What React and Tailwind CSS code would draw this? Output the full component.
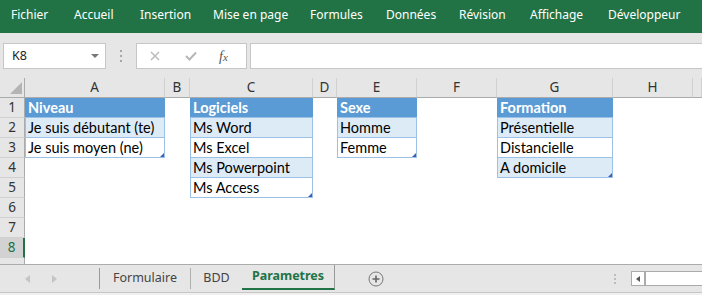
import React from "react";

const ribbon = [
  ["Fichier", 63],
  ["Accueil", 66],
  ["Insertion", 73],
  ["Mise en page", 97],
  ["Formules", 76],
  ["Données", 73],
  ["Révision", 71],
  ["Affichage", 78],
  ["Développeur", 90],
];

const colLetters = ["A", "B", "C", "D", "E", "F", "G", "H", ""];

const tables = {
  0: ["Niveau", "Je suis débutant (te)", "Je suis moyen (ne)"],
  2: ["Logiciels", "Ms Word", "Ms Excel", "Ms Powerpoint", "Ms Access"],
  4: ["Sexe", "Homme", "Femme"],
  6: ["Formation", "Présentielle", "Distancielle", "A domicile"],
};

const cellFont = { fontFamily: "Lato, 'Liberation Sans', sans-serif" };

function Cell({ col, row }) {
  const t = tables[col];
  if (!t || row > t.length) return <div className="bg-white" />;
  const text = t[row - 1];
  const last = row === t.length;
  if (row === 1) {
    return (
      <div
        className="bg-[#5b9bd5] border-b border-[#9bc2e6] text-white font-bold text-[14.5px] leading-[20px] pl-[3px] whitespace-nowrap overflow-hidden"
        style={cellFont}
      >
        {text}
      </div>
    );
  }
  const banded = row % 2 === 0;
  return (
    <div
      className={`relative border-x border-b border-[#9bc2e6] text-black text-[14.5px] leading-[20px] pl-[2px] whitespace-nowrap overflow-hidden ${
        banded ? "bg-[#ddebf7]" : "bg-white"
      }`}
      style={cellFont}
    >
      {text}
      {last && (
        <svg className="absolute right-0 bottom-0" width="4" height="4" viewBox="0 0 4 4">
          <path d="M4 0 L4 4 L0 4 Z" fill="#3e5fb5" />
        </svg>
      )}
    </div>
  );
}

export default function App() {
  const rows = [1, 2, 3, 4, 5, 6, 7, 8];
  return (
    <div
      className="w-[702px] h-[295px] overflow-hidden bg-[#e6e6e6] flex flex-col"
      style={{ fontFamily: "'Noto Sans', sans-serif" }}
    >
      {/* Ribbon */}
      <div className="h-[33px] bg-[#217346] flex items-center pl-[11px] pb-[4px] shrink-0">
        {ribbon.map(([label, w]) => (
          <div key={label} className="text-white text-[12px] whitespace-nowrap" style={{ width: w }}>
            {label}
          </div>
        ))}
      </div>

      {/* Formula bar */}
      <div className="h-[45px] flex items-start pt-[10px] shrink-0">
        <div className="ml-[3px] w-[103px] h-[26px] bg-white border border-[#c6c6c6] flex items-center justify-between pl-[8px] pr-[6px]">
          <span className="text-[12.5px] text-[#222]">K8</span>
          <svg width="8" height="5" viewBox="0 0 8 5">
            <path d="M0 0 L8 0 L4 4 Z" fill="#777" />
          </svg>
        </div>
        <div className="w-[30px] h-[26px] flex flex-col items-center justify-center gap-[3px]">
          <span className="w-[2px] h-[2px] bg-[#a6a6a6]" />
          <span className="w-[2px] h-[2px] bg-[#a6a6a6]" />
          <span className="w-[2px] h-[2px] bg-[#a6a6a6]" />
        </div>
        <div className="w-[111px] h-[26px] bg-white border border-[#c6c6c6] flex items-center">
          <svg className="ml-[13px]" width="10" height="10" viewBox="0 0 10 10">
            <path d="M1 1 L9 9 M9 1 L1 9" stroke="#b7b7b7" strokeWidth="1.3" />
          </svg>
          <svg className="ml-[25px]" width="12" height="10" viewBox="0 0 12 10">
            <path d="M1 5 L4.5 8.5 L11 1.5" stroke="#b7b7b7" strokeWidth="2" fill="none" />
          </svg>
          <span
            className="ml-[22px] text-[14px] italic text-[#555]"
            style={{ fontFamily: "'Liberation Serif', serif" }}
          >
            f<span className="text-[11px]">x</span>
          </span>
        </div>
        <div className="ml-[3px] flex-1 h-[26px] bg-white border border-r-0 border-[#c6c6c6]" />
      </div>

      {/* Sheet grid */}
      <div className="flex-1 min-h-0 overflow-hidden grid grid-cols-[25px_140px_25px_123px_24px_80px_80px_116px_80px_1fr] grid-rows-[20px_repeat(9,20px)] bg-white">
        <div className="relative bg-[#e6e6e6] border-r border-b border-[#ababab]">
          <svg className="absolute right-[2px] bottom-[3px]" width="12" height="12" viewBox="0 0 12 12">
            <path d="M12 0 L12 12 L0 12 Z" fill="#b4b4b4" />
          </svg>
        </div>
        {colLetters.map((l, i) => (
          <div
            key={i}
            className="bg-[#e6e6e6] border-r border-b border-r-[#d0d0d0] border-b-[#ababab] text-[13.5px] text-[#333] flex items-center justify-center"
          >
            {l}
          </div>
        ))}
        {rows.map((r) => (
          <React.Fragment key={r}>
            <div
              className={`border-b border-[#d0d0d0] text-[13.5px] flex items-center justify-center ${
                r === 8
                  ? "bg-[#d2d2d2] text-[#217346] border-r-2 border-r-[#217346]"
                  : "bg-[#e6e6e6] text-[#333] border-r border-r-[#ababab]"
              }`}
            >
              {r}
            </div>
            {colLetters.map((_, ci) => (
              <Cell key={ci} col={ci} row={r} />
            ))}
          </React.Fragment>
        ))}
        <div className="bg-[#e6e6e6] border-r border-[#ababab]" />
        {colLetters.map((_, ci) => (
          <div key={ci} className="bg-white" />
        ))}
      </div>

      {/* Tab bar */}
      <div className="h-[29px] shrink-0 border-t border-[#ababab] border-b border-b-[#c6c6c6] bg-[#e6e6e6] flex items-stretch">
        <div className="w-[100px] flex items-center pl-[25px] gap-[22px] border-r border-[#9a9a9a] my-[3px]">
          <svg width="5" height="8" viewBox="0 0 5 8">
            <path d="M5 0 L0 4 L5 8 Z" fill="#c4c4c4" />
          </svg>
          <svg width="5" height="8" viewBox="0 0 5 8">
            <path d="M0 0 L5 4 L0 8 Z" fill="#c4c4c4" />
          </svg>
        </div>
        <div className="w-[91px] flex items-center justify-center text-[12.5px] text-[#444] border-r border-[#b0b0b0] my-[3px]">
          Formulaire
        </div>
        <div className="w-[51px] flex items-center justify-center text-[12.5px] text-[#444]">BDD</div>
        <div className="w-[93px] flex items-center justify-center text-[12.5px] font-bold text-[#217346] border-r border-[#9a9a9a] border-b-2 border-b-[#217346] mb-[2px]">
          Parametres
        </div>
        <div className="w-[82px] flex items-center justify-center">
          <svg width="16" height="16" viewBox="0 0 16 16">
            <circle cx="8" cy="8" r="7" fill="none" stroke="#777" strokeWidth="1" />
            <path d="M8 4.5 V11.5 M4.5 8 H11.5" stroke="#666" strokeWidth="1.6" />
          </svg>
        </div>
        <div className="flex-1 flex items-center justify-end">
          <div className="flex flex-col gap-[2px] mr-[15px]">
            <span className="w-[2px] h-[2px] bg-[#bdbdbd]" />
            <span className="w-[2px] h-[2px] bg-[#bdbdbd]" />
            <span className="w-[2px] h-[2px] bg-[#bdbdbd]" />
          </div>
          <div className="w-[71px] h-[15px] bg-white border border-r-0 border-[#ababab] flex items-stretch">
            <div className="w-[14px] border-r-2 border-[#ababab] flex items-center justify-center">
              <svg width="4" height="6" viewBox="0 0 4 6">
                <path d="M4 0 L0 3 L4 6 Z" fill="#555" />
              </svg>
            </div>
          </div>
        </div>
      </div>
      <div className="h-[2px] bg-[#f0f0f0]" />
    </div>
  );
}
